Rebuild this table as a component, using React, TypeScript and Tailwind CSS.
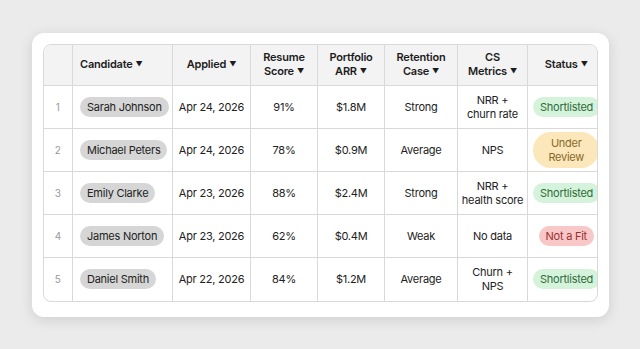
const rows = [
  { name: 'Sarah Johnson', applied: 'Apr 24, 2026', score: '91%', arr: '$1.8M', retention: 'Strong', metrics: ['NRR +', 'churn rate'], status: 'shortlisted' },
  { name: 'Michael Peters', applied: 'Apr 24, 2026', score: '78%', arr: '$0.9M', retention: 'Average', metrics: ['NPS'], status: 'review' },
  { name: 'Emily Clarke', applied: 'Apr 23, 2026', score: '88%', arr: '$2.4M', retention: 'Strong', metrics: ['NRR +', 'health score'], status: 'shortlisted' },
  { name: 'James Norton', applied: 'Apr 23, 2026', score: '62%', arr: '$0.4M', retention: 'Weak', metrics: ['No data'], status: 'notfit' },
  { name: 'Daniel Smith', applied: 'Apr 22, 2026', score: '84%', arr: '$1.2M', retention: 'Average', metrics: ['Churn +', 'NPS'], status: 'shortlisted' },
] as const

type Status = (typeof rows)[number]['status']

const statusConfig: Record<Status, { lines: string[]; className: string }> = {
  shortlisted: { lines: ['Shortlisted'], className: 'bg-[#d5f3da] text-[#2f6b3c]' },
  review: { lines: ['Under', 'Review'], className: 'w-[66px] bg-[#fbe7b9] text-[#8a6a2c] py-[4px]' },
  notfit: { lines: ['Not a Fit'], className: 'bg-[#f8c8c8] text-[#9c2f2f]' },
}

function Caret() {
  return <span className="ml-[3px] inline-block text-[7px] align-[1px]">▼</span>
}

function HeaderCell({ lines, last, left }: { lines: string[]; last?: boolean; left?: boolean }) {
  return (
    <th
      className={[
        'border-b border-[#d9d9d9] text-[11px] font-semibold leading-[14px] tracking-[-0.2px] text-[#1c1c1c]',
        left ? 'pl-[7px] text-left' : 'px-1 text-center',
        last ? '' : 'border-r',
      ].join(' ')}
    >
      {lines.map((line, i) => (
        <div key={i} className="whitespace-nowrap">
          {line}
          {i === lines.length - 1 ? <Caret /> : null}
        </div>
      ))}
    </th>
  )
}

function StatusPill({ status }: { status: Status }) {
  const cfg = statusConfig[status]
  return (
    <span className={['inline-block whitespace-nowrap rounded-full px-[7px] py-[3px] text-[11px] leading-[14px]', cfg.className].join(' ')}>
      {cfg.lines.map((line) => (
        <div key={line}>{line}</div>
      ))}
    </span>
  )
}

export default function App() {
  return (
    <div className="flex h-[349px] w-[640px] items-center justify-center bg-[#ebebeb] font-['Inter',sans-serif]">
      <div className="w-[577px] rounded-[12px] bg-white px-[11px] pb-[15px] pt-[11px] shadow-[0_3px_14px_rgba(0,0,0,0.12)]">
        <div className="overflow-hidden rounded-[8px] border border-[#d9d9d9]">
          <table className="w-[561px] table-fixed border-collapse">
            <colgroup>
              <col className="w-[29px]" />
              <col className="w-[100px]" />
              <col className="w-[78px]" />
              <col className="w-[67px]" />
              <col className="w-[67px]" />
              <col className="w-[73px]" />
              <col className="w-[70px]" />
              <col className="w-[77px]" />
            </colgroup>
            <thead>
              <tr className="h-[41px] bg-[#f3f3f3]">
                <th className="border-b border-r border-[#d9d9d9]" />
                <HeaderCell lines={['Candidate']} left />
                <HeaderCell lines={['Applied']} />
                <HeaderCell lines={['Resume', 'Score']} />
                <HeaderCell lines={['Portfolio', 'ARR']} />
                <HeaderCell lines={['Retention', 'Case']} />
                <HeaderCell lines={['CS', 'Metrics']} />
                <HeaderCell lines={['Status']} last />
              </tr>
            </thead>
            <tbody className="text-[11px] leading-[14px] tracking-[-0.25px] text-[#222]">
              {rows.map((row, idx) => {
                const b = idx === rows.length - 1 ? '' : 'border-b'
                return (
                  <tr key={row.name} className="h-[43px]">
                    <td className={`${b} border-r border-[#d9d9d9] text-center text-[10px] text-[#9a9a9a]`}>{idx + 1}</td>
                    <td className={`${b} border-r border-[#d9d9d9] pl-[7px]`}>
                      <span className="inline-block whitespace-nowrap rounded-full bg-[#d6d6d6] px-[7px] py-[3px]">{row.name}</span>
                    </td>
                    <td className={`${b} border-r border-[#d9d9d9] whitespace-nowrap text-center`}>{row.applied}</td>
                    <td className={`${b} border-r border-[#d9d9d9] text-center`}>{row.score}</td>
                    <td className={`${b} border-r border-[#d9d9d9] text-center`}>{row.arr}</td>
                    <td className={`${b} border-r border-[#d9d9d9] text-center`}>{row.retention}</td>
                    <td className={`${b} border-r border-[#d9d9d9] text-center`}>
                      {row.metrics.map((m) => (
                        <div key={m} className="whitespace-nowrap">{m}</div>
                      ))}
                    </td>
                    <td className={`${b} border-[#d9d9d9] px-[5px] text-center`}>
                      <StatusPill status={row.status} />
                    </td>
                  </tr>
                )
              })}
            </tbody>
          </table>
        </div>
      </div>
    </div>
  )
}
